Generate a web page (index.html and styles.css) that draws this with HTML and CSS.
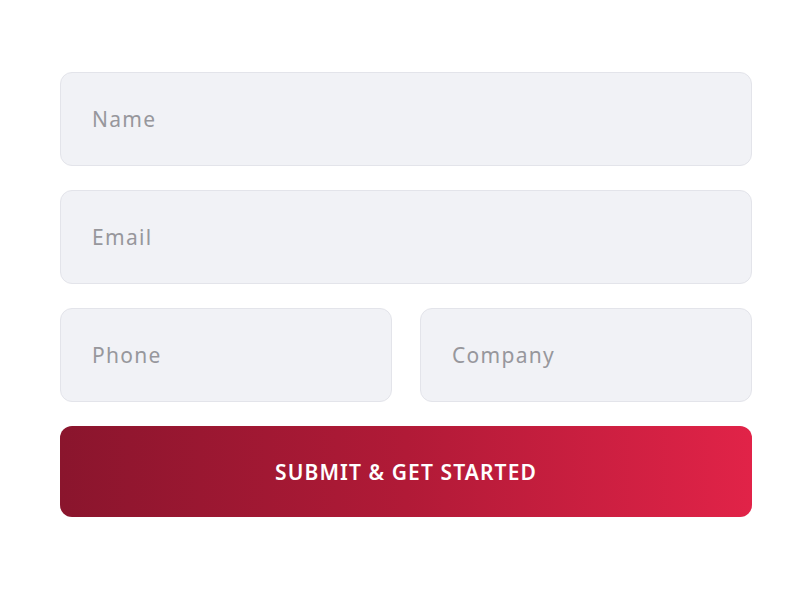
FILE: index.html
```html
<!DOCTYPE html>
<html>
<head>
<meta charset="utf-8">
<link rel="stylesheet" href="styles.css">
</head>
<body>
<form class="form">
  <div class="field">Name</div>
  <div class="field">Email</div>
  <div class="row">
    <div class="field">Phone</div>
    <div class="field">Company</div>
  </div>
  <div class="submit">SUBMIT &amp; GET STARTED</div>
</form>
</body>
</html>
```
FILE: styles.css
```css
html, body {
  margin: 0;
  background: #ffffff;
}
body {
  padding: 72px 48px 0 60px;
  font-family: "Noto Sans", "DejaVu Sans", sans-serif;
}
.form {
  width: 692px;
  display: flex;
  flex-direction: column;
  gap: 24px;
}
.row {
  display: grid;
  grid-template-columns: 1fr 1fr;
  gap: 28px;
}
.field {
  box-sizing: border-box;
  height: 94px;
  border: 1.5px solid #e3e4ea;
  border-radius: 12px;
  background: #f1f2f6;
  padding-left: 31px;
  display: flex;
  align-items: center;
  font-size: 21px;
  color: #97979c;
  letter-spacing: 1.3px;
}
.submit {
  height: 91px;
  border-radius: 12px;
  background: linear-gradient(90deg, #8a152d 0%, #b11a37 50%, #e12348 100%);
  color: #ffffff;
  display: flex;
  align-items: center;
  justify-content: center;
  font-size: 21px;
  font-weight: 600;
  letter-spacing: 1.1px;
}
```
